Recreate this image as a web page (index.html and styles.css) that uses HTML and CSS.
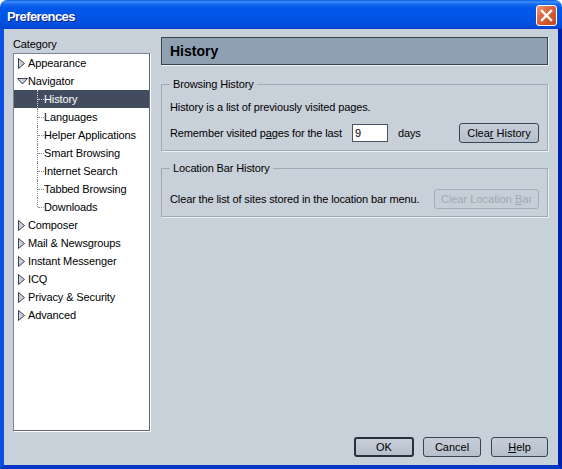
FILE: index.html
```html
<!DOCTYPE html>
<html>
<head>
<meta charset="utf-8">
<title>Preferences</title>
<link rel="stylesheet" href="styles.css">
</head>
<body>
<div class="window">
  <div class="titlebar">
    <span class="title">Preferences</span>
    <span class="close"><svg width="13" height="13" viewBox="0 0 13 13"><path d="M2 2 L11 11 M11 2 L2 11" stroke="#fff" stroke-width="2.4" stroke-linecap="square"/></svg></span>
  </div>
  <div class="client">
    <div class="main">
      <div class="sidebar">
        <div class="cat-label">Category</div>
        <div class="tree">
          <div class="row"><span class="twisty"><svg width="11" height="11" viewBox="0 0 11 11"><path d="M1.5 0.5 L7.5 5.5 L1.5 10.5 Z" fill="#c8d0d9" stroke="#3b4250"/></svg></span><span>Appearance</span></div>
          <div class="row"><span class="twisty"><svg width="11" height="11" viewBox="0 0 11 11"><path d="M0.5 2.5 L10.5 2.5 L5.5 8 Z" fill="#c8d0d9" stroke="#3b4250"/></svg></span><span>Navigator</span></div>
          <div class="row child selected"><span class="conn"></span><span>History</span></div>
          <div class="row child"><span class="conn"></span><span>Languages</span></div>
          <div class="row child"><span class="conn"></span><span>Helper Applications</span></div>
          <div class="row child"><span class="conn"></span><span>Smart Browsing</span></div>
          <div class="row child"><span class="conn"></span><span>Internet Search</span></div>
          <div class="row child"><span class="conn"></span><span>Tabbed Browsing</span></div>
          <div class="row child"><span class="conn last"></span><span>Downloads</span></div>
          <div class="row"><span class="twisty"><svg width="11" height="11" viewBox="0 0 11 11"><path d="M1.5 0.5 L7.5 5.5 L1.5 10.5 Z" fill="#c8d0d9" stroke="#3b4250"/></svg></span><span>Composer</span></div>
          <div class="row"><span class="twisty"><svg width="11" height="11" viewBox="0 0 11 11"><path d="M1.5 0.5 L7.5 5.5 L1.5 10.5 Z" fill="#c8d0d9" stroke="#3b4250"/></svg></span><span>Mail &amp; Newsgroups</span></div>
          <div class="row"><span class="twisty"><svg width="11" height="11" viewBox="0 0 11 11"><path d="M1.5 0.5 L7.5 5.5 L1.5 10.5 Z" fill="#c8d0d9" stroke="#3b4250"/></svg></span><span>Instant Messenger</span></div>
          <div class="row"><span class="twisty"><svg width="11" height="11" viewBox="0 0 11 11"><path d="M1.5 0.5 L7.5 5.5 L1.5 10.5 Z" fill="#c8d0d9" stroke="#3b4250"/></svg></span><span>ICQ</span></div>
          <div class="row"><span class="twisty"><svg width="11" height="11" viewBox="0 0 11 11"><path d="M1.5 0.5 L7.5 5.5 L1.5 10.5 Z" fill="#c8d0d9" stroke="#3b4250"/></svg></span><span>Privacy &amp; Security</span></div>
          <div class="row"><span class="twisty"><svg width="11" height="11" viewBox="0 0 11 11"><path d="M1.5 0.5 L7.5 5.5 L1.5 10.5 Z" fill="#c8d0d9" stroke="#3b4250"/></svg></span><span>Advanced</span></div>
        </div>
      </div>
      <div class="content">
        <div class="header">History</div>
        <fieldset class="group">
          <legend>Browsing History</legend>
          <div class="line first">History is a list of previously visited pages.</div>
          <div class="ctrl-row">
            <span>Remember visited p<u>a</u>ges for the last</span>
            <input class="days" type="text" value="9">
            <span>days</span>
            <button class="btn clear-hist">Clea<u>r</u> History</button>
          </div>
        </fieldset>
        <fieldset class="group second">
          <legend>Location Bar History</legend>
          <div class="ctrl-row loc">
            <span>Clear the list of sites stored in the location bar menu.</span>
            <button class="btn clear-loc" disabled>Clear Location <u>B</u>ar</button>
          </div>
        </fieldset>
      </div>
    </div>
    <div class="footer">
      <button class="btn ok">OK</button>
      <button class="btn cancel">Cancel</button>
      <button class="btn help"><u>H</u>elp</button>
    </div>
  </div>
</div>
</body>
</html>
```
FILE: styles.css
```css
html, body {
  margin: 0;
  padding: 0;
}
body {
  width: 562px;
  height: 469px;
  overflow: hidden;
  background: #ffffff;
  font-family: "Liberation Sans", Arial, sans-serif;
  font-size: 11px;
  letter-spacing: -0.12px;
  color: #000;
}
.window {
  display: flex;
  flex-direction: column;
  height: 469px;
}
.titlebar {
  height: 29px;
  flex: none;
  box-sizing: border-box;
  display: flex;
  align-items: center;
  justify-content: space-between;
  padding: 2px 5px 0 7px;
  border-radius: 7px 7px 0 0;
  background: linear-gradient(to bottom,
    #0a5fe6 0px, #3d8ef7 2px, #1a6af0 4px, #0058e8 8px,
    #0055e5 16px, #0052e2 22px, #004bd9 26px, #0040c9 29px);
}
.title {
  color: #fff;
  font-weight: bold;
  font-size: 13px;
  letter-spacing: -0.6px;
  text-shadow: 1px 1px 0 #0a1f8f;
  padding-top: 2px;
}
.close {
  width: 21px;
  height: 21px;
  box-sizing: border-box;
  border: 1px solid #fff;
  border-radius: 3px;
  background: linear-gradient(135deg, #ee9a7c 0%, #e06a42 35%, #d35528 70%, #c2451f 100%);
  display: flex;
  align-items: center;
  justify-content: center;
}
.close svg { display: block; }
.client {
  flex: 1;
  display: flex;
  flex-direction: column;
  min-height: 0;
  background: #c8d0d9;
  border-left: 4px solid #0c4fe2;
  border-right: 4px solid #0021ab;
  border-bottom: 4px solid #0735c6;
  padding: 8px 10px 8px 9px;
}
.main {
  flex: 1;
  min-height: 0;
  display: flex;
  gap: 11px;
}
.sidebar {
  width: 137px;
  flex: none;
  display: flex;
  flex-direction: column;
}
.cat-label {
  height: 16px;
  line-height: 15px;
}
.tree {
  flex: 1;
  background: #fff;
  border: 1px solid;
  border-color: #7d8591 #5f6673 #5f6673 #7d8591;
  box-shadow: 1px 1px 0 #ffffff;
}
.row {
  height: 18px;
  display: flex;
  align-items: center;
  padding-left: 3px;
  white-space: nowrap;
}
.twisty {
  width: 11px;
  height: 11px;
  flex: none;
}
.twisty svg { display: block; }
.row.child {
  padding-left: 23px;
}
.conn {
  position: relative;
  width: 7px;
  align-self: stretch;
  flex: none;
}
.conn::before {
  content: "";
  position: absolute;
  left: 0;
  top: 0;
  bottom: 0;
  border-left: 1px dotted #8c8c8c;
}
.conn.last::before {
  bottom: 9px;
}
.conn::after {
  content: "";
  position: absolute;
  left: 1px;
  right: 0;
  top: 9px;
  border-top: 1px dotted #8c8c8c;
}
.row.selected {
  background: #434c5e;
  color: #fff;
}
.row.selected .conn::before,
.row.selected .conn::after {
  border-color: #d0d4da;
}
.content {
  flex: 1;
  min-width: 0;
  display: flex;
  flex-direction: column;
}
.header {
  height: 28px;
  flex: none;
  box-sizing: border-box;
  border: 1px solid #3b424e;
  background: #8fa0b3;
  box-shadow: 1px 1px 0 #eef1f4;
  font-weight: bold;
  font-size: 14px;
  letter-spacing: 0;
  padding-left: 8px;
  display: flex;
  align-items: center;
}
.group {
  margin: 12px 0 0;
  padding: 0 8px 7px;
  border: 1px solid #a0a9b4;
  box-shadow: 1px 1px 0 #eef1f4;
  min-width: 0;
}
.group.second {
  margin-top: 10px;
}
.group legend {
  padding: 0 3px;
  margin-left: 0;
  line-height: 14px;
}
.line {
  line-height: 14px;
}
.line.first {
  margin-top: 9px;
}
.ctrl-row {
  display: flex;
  align-items: center;
  height: 20px;
  margin-top: 9px;
  white-space: nowrap;
}
.ctrl-row.loc {
  margin-top: 14px;
}
.days {
  width: 36px;
  height: 18px;
  box-sizing: border-box;
  margin: 0 10px;
  padding: 0 2px;
  border: 1px solid #4b5260;
  background: #fff;
  font: inherit;
  color: #000;
  outline: none;
}
.btn {
  height: 20px;
  box-sizing: border-box;
  border: 1px solid #3c4351;
  border-radius: 3px;
  background: linear-gradient(to bottom, #c6ced8, #b6c0cc);
  font: inherit;
  color: #000;
  padding: 0;
  text-align: center;
}
.clear-hist {
  width: 80px;
  margin-left: auto;
}
.clear-loc {
  width: 105px;
  margin-left: auto;
  border-color: #a4adb8;
  background: #c6ced8;
  color: #a2aab5;
}
.footer {
  flex: none;
  height: 20px;
  margin-top: 6px;
  display: flex;
  justify-content: flex-end;
}
.ok {
  width: 60px;
  border: 2px solid #2b313c;
}
.cancel {
  width: 58px;
  margin-left: 9px;
}
.help {
  width: 57px;
  margin-left: 10px;
}
```
